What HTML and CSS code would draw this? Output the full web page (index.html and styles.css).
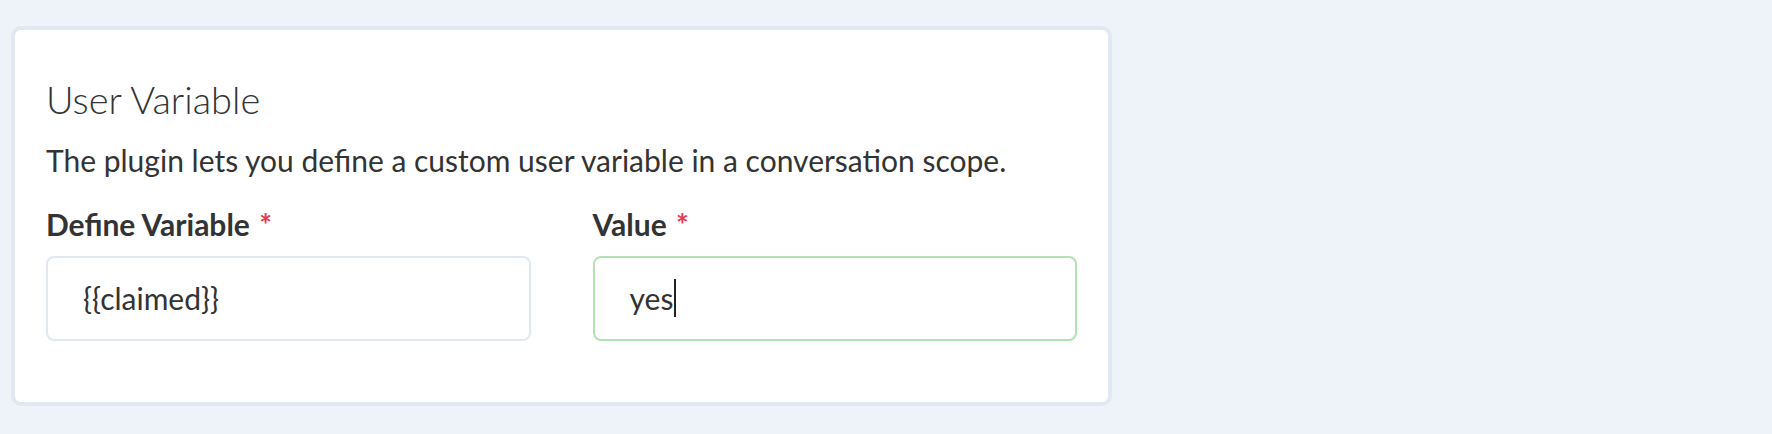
FILE: index.html
```html
<!DOCTYPE html>
<html>
<head>
<meta charset="utf-8">
<link rel="stylesheet" href="styles.css">
</head>
<body>
<section class="card">
  <h2 class="title">User Variable</h2>
  <p class="desc">The plugin lets you define a custom user variable in a conversation scope.</p>
  <div class="fields">
    <div class="field">
      <label class="label">Define Variable <span class="req">*</span></label>
      <div class="input">{{claimed}}</div>
    </div>
    <div class="field">
      <label class="label">Value <span class="req">*</span></label>
      <div class="input input-focus">yes<span class="caret"></span></div>
    </div>
  </div>
</section>
</body>
</html>
```
FILE: styles.css
```css
html, body {
  margin: 0;
  padding: 0;
}
body {
  background: #eef2f9;
  font-family: Lato, "Noto Sans", sans-serif;
  color: #333333;
  padding: 26px 0 0 11px;
}
.card {
  box-sizing: border-box;
  width: 1101px;
  height: 380px;
  background: #ffffff;
  border: 4px solid #e1e8f3;
  border-radius: 10px;
  padding: 46px 31px 0 31px;
}
.title {
  margin: 0;
  font-size: 38px;
  line-height: 46px;
  font-weight: 300;
  color: #333333;
}
.desc {
  margin: 20px 0 0 0;
  font-size: 30px;
  line-height: 36px;
  color: #333333;
}
.fields {
  margin-top: 28px;
  display: grid;
  grid-template-columns: 1fr 1fr;
  column-gap: 62px;
}
.field {
  display: flex;
  flex-direction: column;
}
.label {
  font-size: 30px;
  line-height: 36px;
  font-weight: 700;
  color: #333333;
}
.req {
  color: #ec3a4c;
  font-weight: 700;
  margin-left: 2px;
}
.input {
  box-sizing: border-box;
  margin-top: 14px;
  height: 84.5px;
  border: 2px solid #e1e8f3;
  border-radius: 8px;
  padding-left: 35px;
  display: flex;
  align-items: center;
  font-size: 30px;
  line-height: 36px;
  color: #333333;
}
.input-focus {
  border-color: #b3e2b3;
}
.caret {
  display: inline-block;
  width: 2px;
  height: 38px;
  background: #222222;
  margin-left: 1px;
}
```
